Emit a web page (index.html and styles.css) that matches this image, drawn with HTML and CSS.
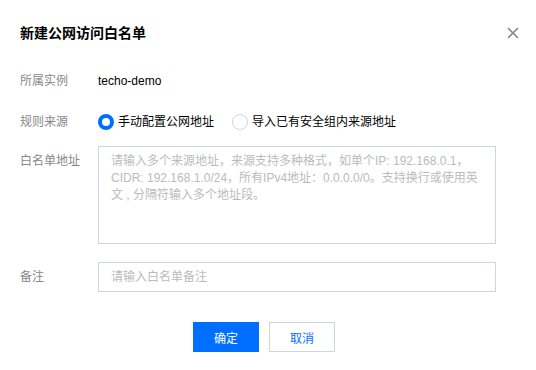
FILE: index.html
```html
<!DOCTYPE html>
<html lang="zh-CN">
<head>
<meta charset="utf-8">
<title>新建公网访问白名单</title>
<link rel="stylesheet" href="styles.css">
</head>
<body>
<div class="dialog">
  <div class="header">
    <h1 class="title">新建公网访问白名单</h1>
    <button class="close" aria-label="关闭">
      <svg width="12" height="12" viewBox="0 0 12 12"><path d="M1 1L11 11M11 1L1 11" stroke="#888" stroke-width="1.6" fill="none"/></svg>
    </button>
  </div>
  <form class="form">
    <div class="row row-instance">
      <div class="label">所属实例</div>
      <div class="value">techo-demo</div>
    </div>
    <div class="row row-source">
      <div class="label">规则来源</div>
      <div class="radios">
        <label class="radio"><span class="dot checked"></span><span>手动配置公网地址</span></label>
        <label class="radio"><span class="dot"></span><span>导入已有安全组内来源地址</span></label>
      </div>
    </div>
    <div class="row row-list">
      <div class="label">白名单地址</div>
      <textarea class="textarea" placeholder="请输入多个来源地址，来源支持多种格式，如单个IP: 192.168.0.1，&#10;CIDR: 192.168.1.0/24，所有IPv4地址：0.0.0.0/0。支持换行或使用英&#10;文 , 分隔符输入多个地址段。"></textarea>
    </div>
    <div class="row row-note">
      <div class="label">备注</div>
      <input class="input" type="text" placeholder="请输入白名单备注">
    </div>
    <div class="footer">
      <button type="button" class="btn primary">确定</button>
      <button type="button" class="btn">取消</button>
    </div>
  </form>
</div>
</body>
</html>
```
FILE: styles.css
```css
* { box-sizing: border-box; }
html, body { margin: 0; padding: 0; background: #fff; }
body {
  font-family: "Liberation Sans", "Noto Sans CJK SC", sans-serif;
  font-size: 12px;
  color: #000;
}
.dialog { width: 536px; height: 370px; }
.header {
  display: flex;
  align-items: center;
  justify-content: space-between;
  padding: 23px 17px 0 20px;
  height: 43px;
}
.title {
  margin: 0;
  font-size: 14px;
  font-weight: bold;
  line-height: 20px;
  color: #000;
}
.close {
  border: 0;
  background: none;
  padding: 0;
  width: 12px;
  height: 12px;
  display: flex;
  cursor: pointer;
}
.form { padding: 23px 28px 0 20px; }
.row { display: flex; align-items: flex-start; }
.label {
  width: 78px;
  flex: none;
  color: #888;
  line-height: 30px;
}
.value { line-height: 30px; color: #000; }
.row-instance { margin-bottom: 11px; }
.row-source { margin-bottom: 9px; }
.row-list { margin-bottom: 18px; }
.radios { display: flex; align-items: center; height: 30px; gap: 18px; }
.radio { display: flex; align-items: center; gap: 4px; line-height: 16px; }
.dot {
  width: 16px; height: 16px; border-radius: 50%;
  border: 1px solid #cfd5de; background: #fff; flex: none;
}
.dot.checked { border: 4px solid #006eff; }
.textarea, .input {
  width: 398px;
  border: 1px solid #cfd5de;
  border-radius: 0;
  font-family: inherit;
  font-size: 12px;
  color: #000;
  padding: 6px 10px 0 12px;
  outline: none;
  margin: 0;
}
.textarea {
  height: 98px;
  line-height: 17px;
  resize: none;
  display: block;
  overflow: hidden;
}
.input { height: 30px; padding: 0 10px 0 12px; line-height: 28px; }
.textarea::placeholder, .input::placeholder { color: #bbb; }
.footer {
  display: flex;
  justify-content: center;
  gap: 10px;
  margin-top: 30px;
}
.btn {
  width: 66px;
  height: 30px;
  border: 1px solid #cfd5de;
  background: #fff;
  color: #006eff;
  font-family: inherit;
  font-size: 12px;
  padding: 0;
  cursor: pointer;
}
.btn.primary { background: #006eff; border-color: #006eff; color: #fff; }
```
